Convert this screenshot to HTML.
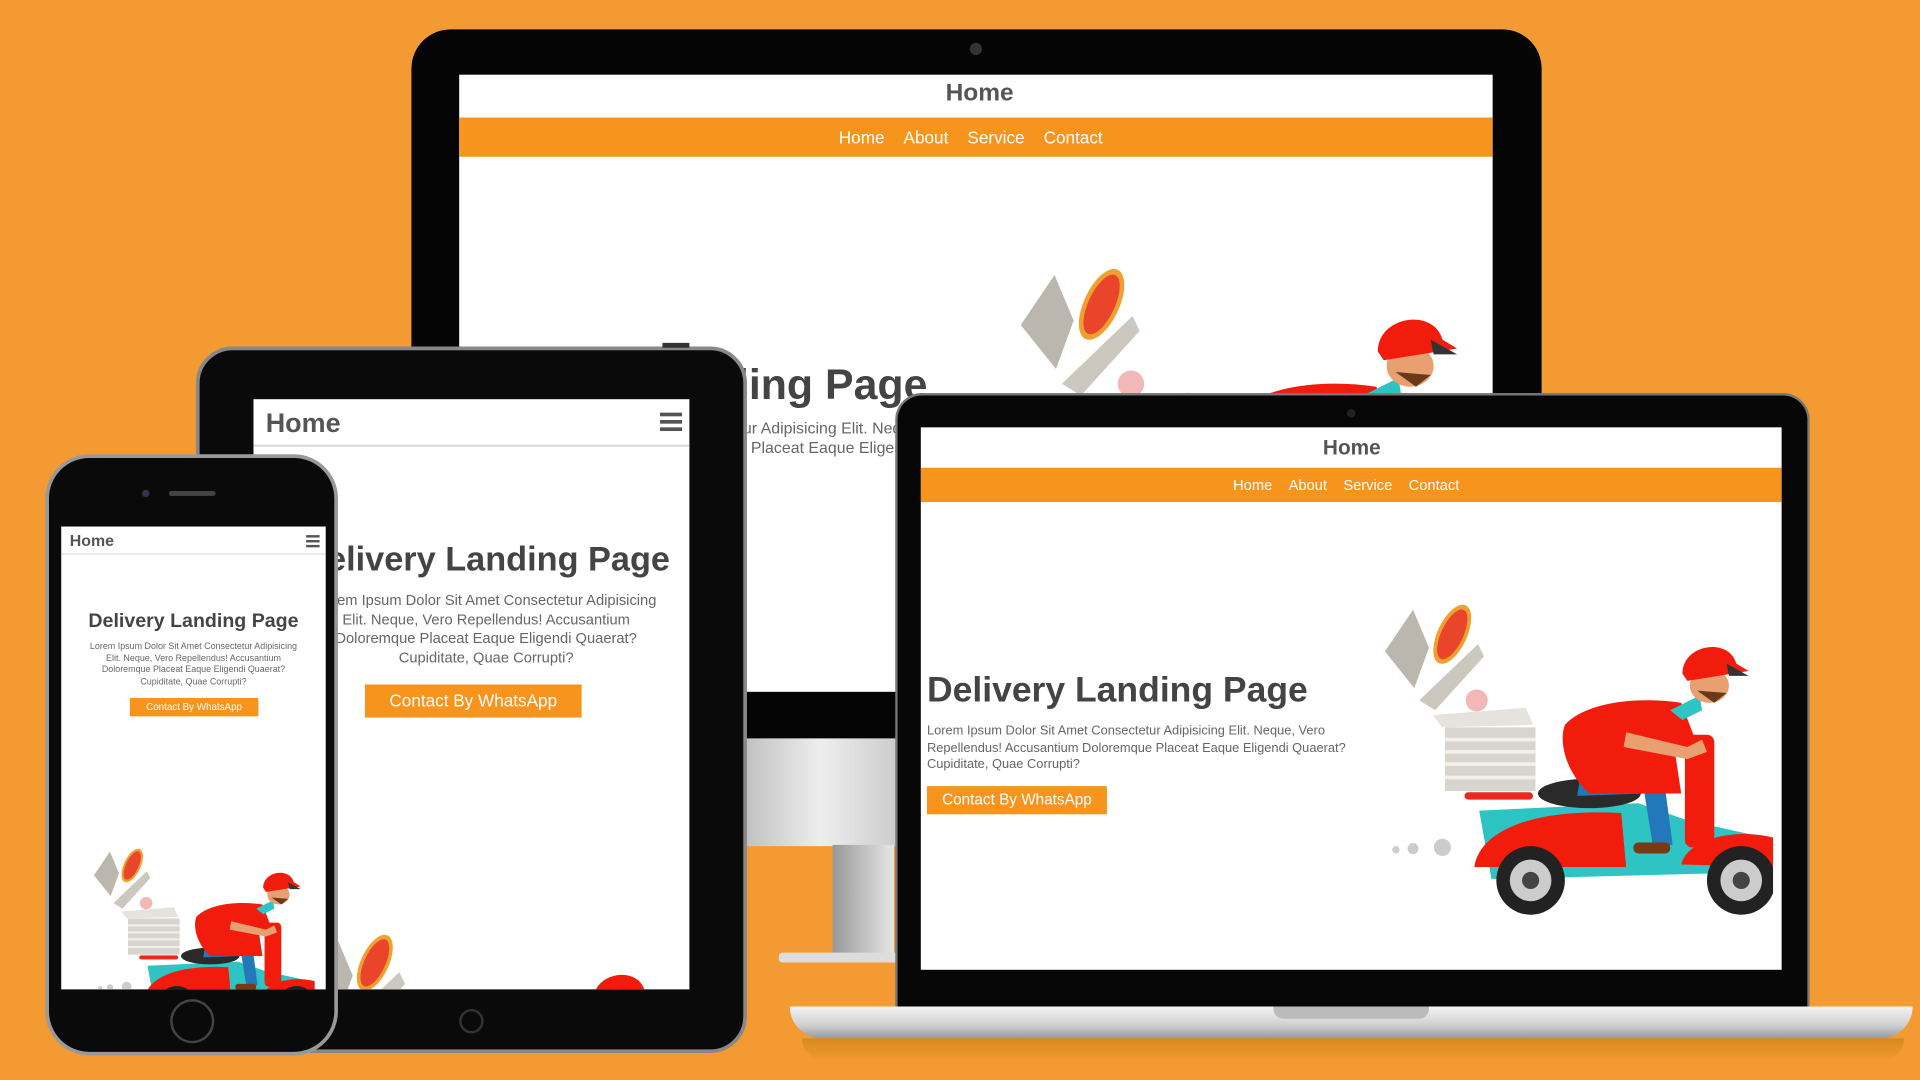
<!DOCTYPE html>
<html><head><meta charset="utf-8">
<style>
*{margin:0;padding:0;box-sizing:border-box}
html,body{width:1920px;height:1080px;overflow:hidden;background:#F39B32}
#w{position:absolute;left:0;top:0;width:1568px;height:882px;overflow:hidden;transform:scale(1.22449);transform-origin:0 0;font-family:"Liberation Sans Narrow","Liberation Sans",sans-serif}
.a{position:absolute}
.scr{position:absolute;background:#fff;overflow:hidden}
.t{position:absolute;white-space:nowrap;color:#444}
.c{text-align:center;transform:translateX(-50%)}
.btn{position:absolute;background:#F7941D;color:#fff;text-align:center}
</style></head><body>
<svg width="0" height="0" style="position:absolute">
<defs>
<g id="sc">
 <circle cx="12" cy="214" r="3" fill="#ccc"/><circle cx="26" cy="213" r="4.5" fill="#ccc"/><circle cx="50" cy="212" r="7" fill="#ccc"/>
 <polygon points="3,52 26,18 39,49 27,82" fill="#bbb6ae"/>
 <polygon points="31,92 79,46 84,56 44,100" fill="#ccc8c0"/>
 <ellipse cx="58" cy="38" rx="12" ry="26" transform="rotate(25 58 38)" fill="#f0a030"/>
 <ellipse cx="58" cy="38" rx="9" ry="22" transform="rotate(25 58 38)" fill="#e8452a"/>
 <polygon points="42,104 118,98 124,112 50,114" fill="#e6e3de"/>
 <circle cx="78" cy="92" r="9" fill="#f2b8b8"/>
 <rect x="52" y="114" width="74" height="52" fill="#d8d5cf"/>
 <path d="M52 124H126M52 134H126M52 144H126M52 155H126" stroke="#f2f0ec" stroke-width="3"/>
 <rect x="68" y="167" width="56" height="6" rx="3" fill="#e8291c"/>
 <polygon points="80,182 210,176 250,190 318,205 320,232 90,238" fill="#2ec4c4"/>
 <path d="M76 228C80 200 120 180 196 184L200 228Z" fill="#f21c0c"/>
 <path d="M245 226C250 205 290 195 324 205L322 228Z" fill="#f21c0c"/>
 <rect x="248" y="120" width="24" height="92" rx="6" fill="#f21c0c"/>
 <ellipse cx="170" cy="168" rx="42" ry="12" fill="#2a2a2a"/>
 <path d="M165 140L230 150 238 210 222 212 215 168 160 170Z" fill="#2278b8"/>
 <rect x="206" y="208" width="30" height="9" rx="4" fill="#7a3a10"/>
 <path d="M150 112C165 95 205 88 245 94L258 128 240 135 245 168 170 168C150 150 145 125 150 112Z" fill="#f21c0c"/>
 <path d="M236 100L260 88 262 100 246 108Z" fill="#2ec4c4"/>
 <path d="M200 118L250 130 262 124 266 134 250 140 198 130Z" fill="#e8a070"/>
 <ellipse cx="268" cy="80" rx="16" ry="14" fill="#e8a070"/>
 <path d="M246 70C246 46 284 40 290 62L300 68 250 76Z" fill="#f21c0c"/>
 <path d="M282 62L300 72 284 72Z" fill="#333"/>
 <path d="M258 84L282 86 272 94Z" fill="#6a3a18"/>
 <circle cx="122" cy="239" r="28" fill="#222"/><circle cx="122" cy="239" r="17" fill="#ccc"/><circle cx="122" cy="239" r="7" fill="#444"/>
 <circle cx="294" cy="239" r="28" fill="#222"/><circle cx="294" cy="239" r="17" fill="#ccc"/><circle cx="294" cy="239" r="7" fill="#444"/>
</g>
</defs></svg>
<div id="w">
<!-- monitor -->
<div class="a" style="left:336px;top:24px;width:923px;height:580px;background:#050505;border-radius:32px 32px 0 0"></div>
<div class="a" style="left:792px;top:35px;width:10px;height:10px;border-radius:50%;background:#333"></div>
<div class="a" style="left:600px;top:603px;width:140px;height:88px;background:linear-gradient(90deg,#bbb,#eee,#c8c8c8)"></div>
<div class="a" style="left:680px;top:690px;width:50px;height:95px;background:linear-gradient(90deg,#999,#e6e6e6)"></div>
<div class="a" style="left:636px;top:778px;width:100px;height:8px;background:#ddd;border-radius:3px"></div>
<div class="scr" style="left:375px;top:61px;width:844px;height:504px">
 <div class="t c" style="left:425px;top:4px;font-size:20px;font-weight:bold;color:#555">Home</div>
 <div class="a" style="left:0;top:35px;width:844px;height:32px;background:#F7941D"></div>
 <div class="t" style="left:310px;top:43px;font-size:14px;color:#fff;word-spacing:0">Home&nbsp;&nbsp;&nbsp;&nbsp;About&nbsp;&nbsp;&nbsp;&nbsp;Service&nbsp;&nbsp;&nbsp;&nbsp;Contact</div>
 <div class="t" style="left:7px;top:234px;font-size:35px;font-weight:bold">Delivery Landing Page</div>
 <div class="t" style="left:7px;top:281px;font-size:13px;color:#666;line-height:16px">Lorem Ipsum Dolor Sit Amet Consectetur Adipisicing Elit. Neque, Vero<br>Repellendus! Accusantium Doloremque Placeat Eaque Eligendi Quaerat?</div>
 <svg class="a" style="left:455px;top:142px" width="384" height="324" viewBox="0 0 320 270"><use href="#sc"/></svg>
</div>
<!-- tablet -->
<div class="a" style="left:160px;top:283px;width:450px;height:577px;background:#0a0a0a;border-radius:30px;border:3px solid #888"></div>
<div class="a" style="left:541px;top:280px;width:22px;height:4px;background:#333"></div>
<div class="a" style="left:375px;top:824px;width:20px;height:20px;border-radius:50%;border:2px solid #333"></div>
<div class="scr" style="left:207px;top:326px;width:356px;height:482px">
 <div class="a" style="left:0;top:0;width:356px;height:39px;border-bottom:2px solid #ddd"></div>
 <div class="t" style="left:10px;top:7px;font-size:22px;font-weight:bold;color:#555">Home</div>
 <div class="a" style="left:332px;top:11px;width:18px;height:3px;background:#555;box-shadow:0 6px 0 #555,0 12px 0 #555"></div>
 <div class="t c" style="left:190px;top:115px;font-size:28px;font-weight:bold">Delivery Landing Page</div>
 <div class="t c" style="left:190px;top:157px;font-size:12px;color:#666;line-height:15.7px;text-align:center">Lorem Ipsum Dolor Sit Amet Consectetur Adipisicing<br>Elit. Neque, Vero Repellendus! Accusantium<br>Doloremque Placeat Eaque Eligendi Quaerat?<br>Cupiditate, Quae Corrupti?</div>
 <div class="btn" style="left:91px;top:233px;width:177px;height:27px;font-size:14px;line-height:27px">Contact By WhatsApp</div>
 <svg class="a" style="left:44px;top:424px" width="304" height="257" viewBox="0 0 320 270"><use href="#sc"/></svg>
</div>
<!-- phone -->
<div class="a" style="left:37px;top:371px;width:239px;height:491px;background:#0a0a0a;border-radius:36px;border:3px solid #999"></div>
<div class="a" style="left:138px;top:401px;width:38px;height:4px;border-radius:2px;background:#444"></div>
<div class="a" style="left:116px;top:400px;width:6px;height:6px;border-radius:50%;background:#335"></div>
<div class="a" style="left:139px;top:816px;width:36px;height:36px;border-radius:50%;border:2px solid #444"></div>
<div class="scr" style="left:50px;top:430px;width:216px;height:378px">
 <div class="a" style="left:0;top:0;width:216px;height:23px;border-bottom:1px solid #ddd"></div>
 <div class="t" style="left:7px;top:4px;font-size:13px;font-weight:bold;color:#555">Home</div>
 <div class="a" style="left:200px;top:7px;width:11px;height:2px;background:#555;box-shadow:0 4px 0 #555,0 8px 0 #555"></div>
 <div class="t c" style="left:108px;top:69px;font-size:16px;font-weight:bold">Delivery Landing Page</div>
 <div class="t c" style="left:108px;top:93px;font-size:7.3px;color:#666;line-height:9.5px;text-align:center">Lorem Ipsum Dolor Sit Amet Consectetur Adipisicing<br>Elit. Neque, Vero Repellendus! Accusantium<br>Doloremque Placeat Eaque Eligendi Quaerat?<br>Cupiditate, Quae Corrupti?</div>
 <div class="btn" style="left:56px;top:140px;width:105px;height:15px;font-size:8px;line-height:15px">Contact By WhatsApp</div>
 <svg class="a" style="left:25px;top:255px" width="182" height="154" viewBox="0 0 320 270"><use href="#sc"/></svg>
</div>
<!-- laptop -->
<div class="a" style="left:731px;top:321px;width:747px;height:502px;background:#060606;border-radius:22px 22px 0 0;border:2px solid #777;border-bottom:none"></div>
<div class="a" style="left:1100px;top:334px;width:7px;height:7px;border-radius:50%;background:#222"></div>
<div class="a" style="left:645px;top:822px;width:917px;height:26px;background:linear-gradient(#f4f4f4,#cfcfcf 60%,#999);border-radius:0 0 30px 30px"></div>
<div class="a" style="left:1040px;top:822px;width:127px;height:10px;background:#bbb;border-radius:0 0 8px 8px"></div>
<div class="a" style="left:655px;top:848px;width:900px;height:18px;background:linear-gradient(#d88820,rgba(243,155,50,0));border-radius:0 0 40px 40px"></div>
<div class="scr" style="left:752px;top:349px;width:703px;height:443px">
 <div class="t c" style="left:352px;top:7px;font-size:17px;font-weight:bold;color:#555">Home</div>
 <div class="a" style="left:0;top:33px;width:703px;height:28px;background:#F7941D"></div>
 <div class="t" style="left:255px;top:40px;font-size:12px;color:#fff">Home&nbsp;&nbsp;&nbsp;&nbsp;About&nbsp;&nbsp;&nbsp;&nbsp;Service&nbsp;&nbsp;&nbsp;&nbsp;Contact</div>
 <div class="t" style="left:5px;top:199px;font-size:29px;font-weight:bold">Delivery Landing Page</div>
 <div class="t" style="left:5px;top:242px;font-size:10.5px;color:#666;line-height:13.5px">Lorem Ipsum Dolor Sit Amet Consectetur Adipisicing Elit. Neque, Vero<br>Repellendus! Accusantium Doloremque Placeat Eaque Eligendi Quaerat?<br>Cupiditate, Quae Corrupti?</div>
 <div class="btn" style="left:5px;top:293px;width:147px;height:23px;font-size:12.5px;line-height:23px">Contact By WhatsApp</div>
 <svg class="a" style="left:376px;top:131px" width="320" height="270" viewBox="0 0 320 270"><use href="#sc"/></svg>
</div>
</div>
</body></html>
